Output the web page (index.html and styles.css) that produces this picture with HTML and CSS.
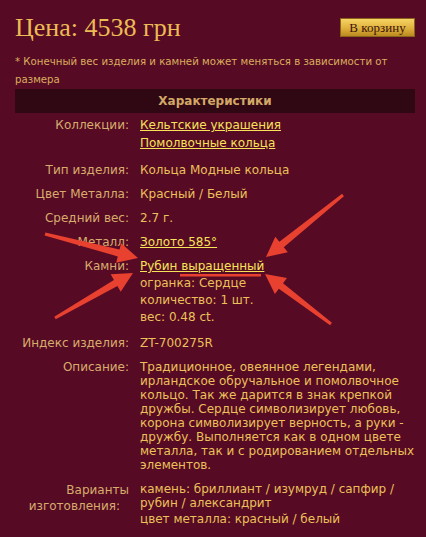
FILE: index.html
```html
<!DOCTYPE html>
<html lang="ru">
<head>
<meta charset="utf-8">
<title>Кольцо</title>
<link rel="stylesheet" href="styles.css">
</head>
<body>
<div class="page">
  <div class="top">
    <h1 class="price">Цена: 4538 грн</h1>
    <button class="cart">В корзину</button>
  </div>
  <p class="note">* Конечный вес изделия и камней может меняться в зависимости от размера</p>
  <div class="sect">Характеристики</div>
  <div class="specs">
    <div class="lbl lbl-coll">Коллекции:</div>
    <div class="val val-coll"><a href="#">Кельтские украшения</a><a href="#" class="second">Помолвочные кольца</a></div>

    <div class="lbl">Тип изделия:</div>
    <div class="val">Кольца Модные кольца</div>

    <div class="lbl">Цвет Металла:</div>
    <div class="val">Красный / Белый</div>

    <div class="lbl">Средний вес:</div>
    <div class="val">2.7 г.</div>

    <div class="lbl">Металл:</div>
    <div class="val"><a href="#">Золото 585°</a></div>

    <div class="lbl lbl-stone">Камни:</div>
    <div class="val val-stone"><a href="#">Рубин выращенный</a><div class="sub first">огранка: Сердце</div><div class="sub">количество: 1 шт.</div><div class="sub">вес: 0.48 ct.</div></div>

    <div class="lbl">Индекс изделия:</div>
    <div class="val">ZT-700275R</div>

    <div class="lbl">Описание:</div>
    <div class="val">Традиционное, овеянное легендами, ирландское обручальное и помолвочное кольцо. Так же дарится в знак крепкой дружбы. Сердце символизирует любовь, корона символизирует верность, а руки - дружбу. Выполняется как в одном цвете металла, так и с родированием отдельных элементов.</div>

    <div class="lbl lbl-var">Варианты<br><span class="pr">изготовления:</span></div>
    <div class="val">камень: бриллиант / изумруд / сапфир / рубин / александрит<div class="metal">цвет металла: красный / белый</div></div>
  </div>

  <svg class="arrows" width="426" height="537" viewBox="0 0 426 537" aria-hidden="true">
    <g fill="#e8412f">
      <polygon points="45.38,232.55 119.52,249.61 121.14,243.32 138,258 116.14,262.68 117.77,256.39 44.63,235.45"/>
      <polygon points="342.06,193.83 279.39,241.73 275.31,236.67 266,257 287.85,252.25 283.77,247.19 343.94,196.17"/>
      <polygon points="54.25,316.7 113.93,279.97 110.68,274.34 133,273 120.68,291.66 117.43,286.03 55.75,319.3"/>
      <polygon points="331.91,322.8 283.05,283.29 286.98,278.11 265,274 274.9,294.05 278.83,288.87 330.09,325.2"/>
      <rect x="180" y="274" width="81" height="2.5"/>
    </g>
  </svg>
</div>
</body>
</html>
```

FILE: styles.css
```css
html, body {
  margin: 0;
  padding: 0;
}
body {
  background: #570a24;
  font-family: "DejaVu Sans", Verdana, sans-serif;
  font-size: 12px;
  color: #eac15a;
}
.page {
  position: relative;
  width: 426px;
  height: 537px;
  overflow: hidden;
  padding: 0 11px 0 15px;
  box-sizing: border-box;
}
.top {
  display: flex;
  justify-content: space-between;
  align-items: flex-start;
  padding-top: 14px;
  height: 39px;
}
.price {
  margin: 0;
  font-family: "Liberation Serif", "Times New Roman", serif;
  font-weight: normal;
  font-size: 26px;
  line-height: 28px;
  color: #ebbb55;
}
.cart {
  margin-top: 4px;
  width: 75px;
  height: 19px;
  padding: 0;
  border: 1px solid #8a6418;
  background: linear-gradient(#f6d464, #e0b03c 55%, #bb8a20);
  font-family: "Liberation Serif", "Times New Roman", serif;
  font-size: 13px;
  color: #3b1309;
  line-height: 17px;
}
.note {
  margin: 0;
  font-size: 10.2px;
  line-height: 18px;
  color: #d9ae5e;
}
.sect {
  height: 24px;
  line-height: 24px;
  text-align: center;
  background: #2f0814;
  font-weight: bold;
  font-size: 12px;
  color: #d3a866;
}
.specs {
  display: grid;
  grid-template-columns: 114px 1fr;
  column-gap: 11px;
}
.lbl, .val {
  padding: 5px 0;
  line-height: 14px;
}
.lbl {
  text-align: right;
  color: #d6ad6c;
}
.val a {
  color: #f6e35a;
  text-decoration: underline;
  display: block;
  width: max-content;
}
.val-coll a.second {
  margin-top: 4px;
}
.lbl-coll, .val-coll {
  padding-bottom: 8px;
}
.sub {
  line-height: 17px;
}
.sub.first {
  margin-top: 2px;
}
.lbl-var {
  line-height: 16px;
}
.pr {
  padding-right: 9px;
}
.metal {
  margin-top: 2px;
}
.arrows {
  position: absolute;
  left: 0;
  top: 0;
  pointer-events: none;
}
```
